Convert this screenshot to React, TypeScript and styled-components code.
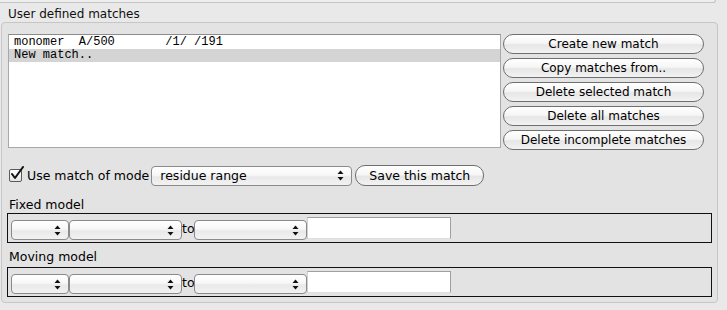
import styled, { createGlobalStyle } from 'styled-components'

const GlobalStyle = createGlobalStyle`
  body {
    margin: 0;
    background: #e9e9e9;
    font-family: 'DejaVu Sans', 'Noto Sans', sans-serif;
    font-size: 12px;
    color: #000;
  }
`

const matches = ['monomer  A/500       /1/ /191', 'New match..']
const actions = [
  'Create new match',
  'Copy matches from..',
  'Delete selected match',
  'Delete all matches',
  'Delete incomplete matches',
]

const Arrows = () => (
  <svg width="7" height="11" viewBox="0 0 7 11">
    <path d="M3.5 0.5 L6.5 4 L0.5 4 Z" fill="#111" />
    <path d="M3.5 10.5 L6.5 7 L0.5 7 Z" fill="#111" />
  </svg>
)

const Popup = ({ width, label }: { width: number; label?: string }) => (
  <PopupStyle style={{ width }}>
    <span className="text">{label}</span>
    <span className="arrows">
      <Arrows />
    </span>
  </PopupStyle>
)

const RangeRow = () => (
  <FieldBox>
    <Popup width={58} />
    <Popup width={113} />
    <ToLabel>to</ToLabel>
    <Popup width={113} />
    <TextField />
  </FieldBox>
)

export default function App() {
  return (
    <Page>
      <GlobalStyle />
      <TopStrip />
      <GroupTitle>User defined matches</GroupTitle>
      <Group>
        <TopRow>
          <MatchList>
            {matches.map((m, i) => (
              <MatchRow key={m} selected={i === 1}>
                {m}
              </MatchRow>
            ))}
          </MatchList>
          <ButtonColumn>
            {actions.map((a) => (
              <PillButton key={a}>{a}</PillButton>
            ))}
          </ButtonColumn>
        </TopRow>
        <ModeRow>
          <CheckBox>
            <svg width="16" height="16" viewBox="0 0 16 16">
              <path
                d="M3 8 L6 12 L14 1"
                stroke="#111"
                strokeWidth="2"
                fill="none"
                strokeLinecap="round"
                strokeLinejoin="round"
              />
            </svg>
          </CheckBox>
          <ModeLabel>Use match of mode</ModeLabel>
          <Popup width={201} label="residue range" />
          <SaveButton>Save this match</SaveButton>
        </ModeRow>
        <SectionLabel>Fixed model</SectionLabel>
        <RangeRow />
        <SectionLabel className="second">Moving model</SectionLabel>
        <RangeRow />
      </Group>
    </Page>
  )
}

const Page = styled.div`
  width: 727px;
  height: 310px;
  overflow: hidden;
`

const TopStrip = styled.div`
  width: 716px;
  height: 3px;
  box-sizing: border-box;
  background: #eeeeee;
  border-bottom: 1px solid #c4c4c4;
  border-right: 1px solid #c4c4c4;
  border-bottom-right-radius: 4px;
`

const GroupTitle = styled.div`
  height: 19px;
  box-sizing: border-box;
  padding: 4px 0 0 8px;
  line-height: 15px;
  color: #111;
`

const Group = styled.div`
  width: 717px;
  height: 281px;
  margin-left: 1px;
  box-sizing: border-box;
  border: 1px solid #c6c6c6;
  border-radius: 4px;
  background: #e3e3e3;
  padding: 11px 0 0 6px;
`

const TopRow = styled.div`
  display: flex;
  align-items: flex-start;
`

const MatchList = styled.div`
  width: 493px;
  height: 114px;
  box-sizing: border-box;
  background: #fff;
  border: 1px solid #a8a8a8;
  border-top-color: #8c8c8c;
  padding-top: 1px;
  font-family: 'Liberation Mono', 'DejaVu Sans Mono', monospace;
  font-size: 12px;
`

const MatchRow = styled.div<{ selected?: boolean }>`
  height: 13px;
  line-height: 13px;
  padding-left: 5px;
  white-space: pre;
  background: ${({ selected }) => (selected ? '#d4d4d4' : 'transparent')};
`

const ButtonColumn = styled.div`
  display: flex;
  flex-direction: column;
  gap: 4px;
  margin-left: 2px;
`

const PillButton = styled.div`
  width: 201px;
  height: 20px;
  box-sizing: border-box;
  border: 1px solid #6f6f6f;
  border-radius: 10px;
  background: linear-gradient(#ffffff 0%, #f6f6f6 45%, #e6e6e6 55%, #f3f3f3 100%);
  text-align: center;
  line-height: 18px;
  white-space: nowrap;
`

const ModeRow = styled.div`
  display: flex;
  align-items: center;
  margin-top: 15px;
  height: 21px;
`

const CheckBox = styled.div`
  position: relative;
  width: 13px;
  height: 13px;
  box-sizing: border-box;
  margin-left: 1px;
  border: 1px solid #5a5a5a;
  border-radius: 2px;
  background: linear-gradient(#ffffff, #e4e4e4);

  & svg {
    position: absolute;
    left: -1px;
    top: -4px;
  }
`

const ModeLabel = styled.span`
  margin: 0 2px 0 5px;
  font-size: 12.5px;
  white-space: nowrap;
`

const PopupStyle = styled.div`
  height: 20px;
  box-sizing: border-box;
  display: flex;
  align-items: center;
  border: 1px solid #8a8a8a;
  border-radius: 4px;
  background: linear-gradient(#ffffff 0%, #f7f7f7 45%, #e9e9e9 55%, #f2f2f2 100%);
  flex-shrink: 0;

  & .text {
    flex: 1;
    padding-left: 8px;
    font-size: 12.5px;
  }

  & .arrows {
    display: flex;
    align-items: center;
    padding-right: 7px;
  }
`

const SaveButton = styled(PillButton)`
  width: 129px;
  height: 21px;
  margin-left: 3px;
  line-height: 19px;
  font-size: 12.5px;
`

const SectionLabel = styled.div`
  margin-top: 10px;
  height: 17px;
  line-height: 17px;
  font-size: 12.5px;
  padding-left: 1px;

  &.second {
    margin-top: 5px;
    height: 19px;
  }
`

const FieldBox = styled.div`
  width: 705px;
  height: 30px;
  margin-left: -1px;
  box-sizing: border-box;
  border: 1px solid #111;
  display: flex;
  align-items: flex-end;
  padding: 0 3px 2px;
`

const ToLabel = styled.span`
  width: 12px;
  align-self: center;
  font-size: 12.5px;
  padding-top: 3px;
`

const TextField = styled.div`
  width: 144px;
  height: 22px;
  box-sizing: border-box;
  margin-bottom: 1px;
  background: #fff;
  border: 1px solid #a0a0a0;
  border-left-color: #d0d0d0;
  border-bottom-color: #e0e0e0;
`
